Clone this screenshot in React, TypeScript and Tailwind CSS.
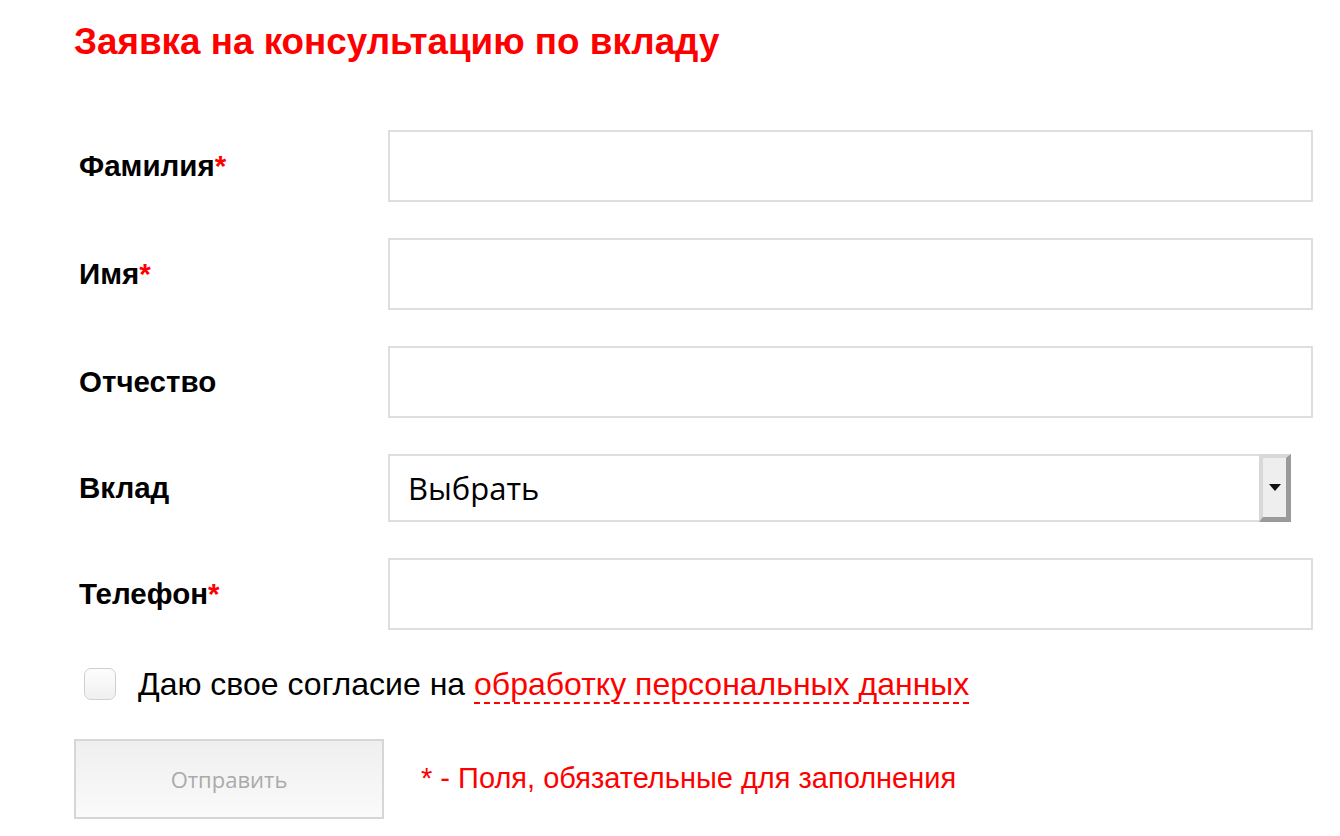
import React from "react";

const Label = ({ text, req }: { text: string; req?: boolean }) => (
  <div className="w-[314px] shrink-0 pl-[5px] text-[29.5px] font-bold leading-[36px] text-black">
    {text}
    {req && <span className="text-[#ff0000]">*</span>}
  </div>
);

const Input = () => (
  <div className="h-[72px] w-[925px] border-2 border-[#dedede] bg-white" />
);

export default function App() {
  return (
    <div className="min-h-[836px] w-[1340px] bg-white pl-[74px] pt-[16px]" style={{ fontFamily: '"Liberation Sans", Arial, sans-serif' }}>
      <h1 className="text-[36.8px] font-bold leading-[52px] text-[#ff0000]">Заявка на консультацию по вкладу</h1>
      <div className="mt-[62px] flex flex-col gap-[36px]">
        <div className="flex items-center">
          <Label text="Фамилия" req />
          <Input />
        </div>
        <div className="flex items-center">
          <Label text="Имя" req />
          <Input />
        </div>
        <div className="flex items-center">
          <Label text="Отчество" />
          <Input />
        </div>
        <div className="flex items-center">
          <Label text="Вклад" />
          <div className="flex h-[68px] w-[903px] items-stretch border-2 border-r-0 border-[#dedede] bg-white">
            <div className="flex flex-1 items-center pl-[18px] text-[31px] text-black" style={{ fontFamily: '"Open Sans", sans-serif' }}>
              Выбрать
            </div>
            <div className="-my-[2px] flex w-[32px] items-center justify-center border-l-[4px] border-t-[4px] border-r-[5px] border-b-[5px] border-l-[#d8d8d8] border-t-[#d8d8d8] border-r-[#9a9a9a] border-b-[#9a9a9a] bg-[#eeeeee]">
              <svg width="12" height="8" viewBox="0 0 12 8">
                <path d="M0 0 H12 L6 7 Z" fill="#111" />
              </svg>
            </div>
          </div>
        </div>
        <div className="flex items-center">
          <Label text="Телефон" req />
          <Input />
        </div>
      </div>
      <div className="mt-[35px] flex items-center pl-[10px]">
        <div className="h-[32px] w-[32px] shrink-0 rounded-[7px] border border-[#d0d0d0] bg-gradient-to-b from-[#fdfdfd] to-[#f0f0f0]" />
        <div className="ml-[22px] text-[32px] leading-[38px] text-black">
          Даю свое согласие на{" "}
          <span className="border-b-2 border-dashed border-[#ff0000] text-[#ff0000]">обработку персональных данных</span>
        </div>
      </div>
      <div className="mt-[36px] flex items-center">
        <div className="flex h-[80px] w-[310px] items-center justify-center border-2 border-[#d6d6d6] bg-gradient-to-b from-[#efefef] to-[#fafafa] text-[22px] text-[#aaaaaa]" style={{ fontFamily: '"Open Sans", sans-serif' }}>
          Отправить
        </div>
        <div className="ml-[37px] text-[29px] text-[#ff0000]">* - Поля, обязательные для заполнения</div>
      </div>
    </div>
  );
}
